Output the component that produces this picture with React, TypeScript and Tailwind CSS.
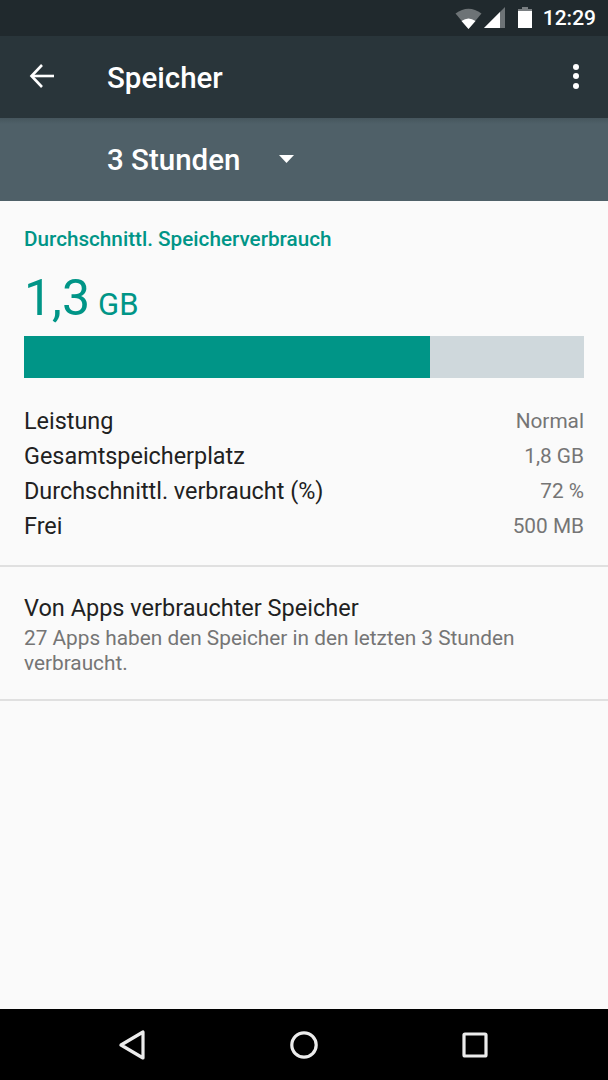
import React from "react";

const rows: [string, string][] = [
  ["Leistung", "Normal"],
  ["Gesamtspeicherplatz", "1,8 GB"],
  ["Durchschnittl. verbraucht (%)", "72 %"],
  ["Frei", "500 MB"],
];

export default function App() {
  return (
    <div className="w-[608px] h-[1080px] flex flex-col bg-[#fafafa] overflow-hidden font-['Roboto',sans-serif]">
      <div className="h-[36px] bg-[#20292d] flex items-center justify-end pr-[12px] shrink-0">
        <svg width="27" height="22" viewBox="0 0 27 22" className="mr-[2px]">
          <path d="M0.5 6.5 Q13.5 -3 26.5 6.5 L13.5 22 Z" fill="#ffffff" fillOpacity="0.35" />
          <path d="M6.5 14 Q13.5 9 20.5 14 L13.5 22 Z" fill="#ffffff" />
        </svg>
        <svg width="22" height="22" viewBox="0 0 22 22" className="mr-[12px]">
          <path d="M0 21 L21 0 L21 21 Z" fill="#ffffff" fillOpacity="0.35" />
          <path d="M0 21 L16 5 L16 21 Z" fill="#ffffff" />
        </svg>
        <svg width="14" height="22" viewBox="0 0 14 22" className="mr-[11px]">
          <path d="M4 0 H10 V2 H14 V21 H0 V2 H4 Z" fill="#ffffff" fillOpacity="0.4" />
          <path d="M0 4 H14 V21 H0 Z" fill="#ffffff" />
        </svg>
        <span className="text-[21px] leading-none font-medium text-white">12:29</span>
      </div>

      <div className="h-[82px] bg-[#29353a] flex items-center shrink-0 relative">
        <div className="w-[107px] shrink-0 flex pl-[29px] pb-[2px]">
          <svg width="26" height="26" viewBox="0 0 26 26" fill="none" stroke="#ffffff" strokeWidth="2.6">
            <path d="M25 13 H3" />
            <path d="M13 2 L2.5 13 L13 24" />
          </svg>
        </div>
        <span className="text-[29.5px] font-medium text-white leading-none pt-[3px]">Speicher</span>
        <div className="ml-auto mr-[29px] flex flex-col gap-[3.5px] pb-[2px]">
          <div className="w-[6px] h-[6px] rounded-full bg-white" />
          <div className="w-[6px] h-[6px] rounded-full bg-white" />
          <div className="w-[6px] h-[6px] rounded-full bg-white" />
        </div>
      </div>

      <div className="h-[83px] bg-[#4f6068] flex items-center pl-[107px] shrink-0 relative">
        <div className="absolute top-0 left-0 right-0 h-[6px] bg-gradient-to-b from-[#46565d] to-[#4f6068]" />
        <span className="text-[29.5px] font-medium text-white leading-none relative pt-[3px]">3 Stunden</span>
        <svg width="15" height="9" viewBox="0 0 15 9" className="ml-[39px] relative">
          <path d="M0 0 H15 L7.5 8 Z" fill="#ffffff" />
        </svg>
      </div>

      <div className="flex-1 flex flex-col">
        <div className="px-[24px] pt-[25px] pb-[21px] border-b-2 border-[#e0e0e0]">
          <div className="text-[20.7px] leading-[26px] font-medium text-[#009587]">Durchschnittl. Speicherverbrauch</div>
          <div className="mt-[19px] h-[55px] flex items-baseline text-[#009587]">
            <span className="text-[50px] leading-[55px]">1,3</span>
            <span className="text-[31px] leading-none ml-[8px]">GB</span>
          </div>
          <div className="mt-[10px] h-[42px] flex bg-[#cfd8dc]">
            <div className="w-[406px] bg-[#009587]" />
          </div>
          <div className="mt-[26px] flex flex-col">
            {rows.map(([label, value]) => (
              <div key={label} className="h-[35px] flex items-center justify-between">
                <span className="text-[23.4px] text-[#212121] leading-none">{label}</span>
                <span className="text-[20.8px] text-[#757575] leading-none">{value}</span>
              </div>
            ))}
          </div>
        </div>

        <div className="px-[24px] pt-[26px] pb-[23px] border-b-2 border-[#e0e0e0]">
          <div className="text-[23.5px] leading-[30px] text-[#212121]">Von Apps verbrauchter Speicher</div>
          <div className="text-[20.8px] leading-[25px] mt-[3px] text-[#757575]">
            27 Apps haben den Speicher in den letzten 3 Stunden verbraucht.
          </div>
        </div>
      </div>

      <div className="h-[71px] bg-black flex items-center justify-center shrink-0 gap-[143px] pr-[2px]">
        <svg width="26" height="30" viewBox="0 0 26 30" fill="none" stroke="#ececec" strokeWidth="3.2" strokeLinejoin="round" className="mr-[1px]">
          <path d="M24 2 V28 L2 15 Z" />
        </svg>
        <svg width="30" height="30" viewBox="0 0 30 30" fill="none" stroke="#ececec" strokeWidth="3.2">
          <circle cx="15" cy="15" r="12.2" />
        </svg>
        <svg width="26" height="26" viewBox="0 0 26 26" fill="none" stroke="#ececec" strokeWidth="3.2" strokeLinejoin="round">
          <rect x="2" y="2" width="22" height="22" rx="1" />
        </svg>
      </div>
    </div>
  );
}
